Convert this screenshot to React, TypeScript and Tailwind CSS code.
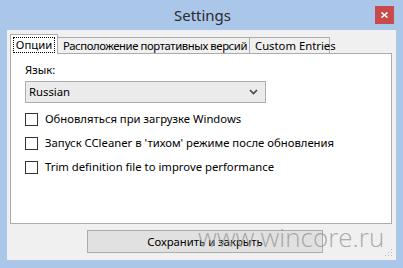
import React from "react";

const font = { fontFamily: '"Noto Sans", "Open Sans", sans-serif' };

function Check({ label }: { label: string }) {
  return (
    <div className="flex items-center h-[24px]">
      <div className="w-[13px] h-[13px] border border-[#333333] bg-white" />
      <span className="ml-[7px] text-[11.3px] text-black leading-none whitespace-nowrap">{label}</span>
    </div>
  );
}

export default function App() {
  return (
    <div
      className="w-[403px] h-[268px] bg-[#aac7ea] flex flex-col relative overflow-hidden"
      style={font}
    >
      {/* title bar */}
      <div className="h-[30px] relative flex items-center justify-center shrink-0">
        <span className="text-[15px] text-[#2b2b2b] leading-none mt-[1px] ml-[2px]">Settings</span>
        <div className="absolute right-[9px] top-[6px] w-[19px] h-[18px] bg-[#c74b4b] flex items-center justify-center">
          <svg width="7" height="6" viewBox="0 0 7 6">
            <path d="M0.5 0.5 L6.5 5.5 M6.5 0.5 L0.5 5.5" stroke="white" strokeWidth="1.6" />
          </svg>
        </div>
      </div>
      {/* client */}
      <div className="mx-[7px] h-[230px] bg-[#f0f0f0] flex flex-col shrink-0 relative">
        <div className="pl-[3px] pr-[4px] pt-[4px] flex flex-col">
          {/* tabs */}
          <div className="flex items-end h-[20px] relative z-10">
            <div className="h-[20px] w-[48px] bg-white border border-[#acacac] border-b-0 flex items-center justify-center">
              <div className="border border-dotted border-black px-[2px] h-[16px] flex items-center text-[11.3px] leading-none text-black whitespace-nowrap">
                Опции
              </div>
            </div>
            <div className="h-[17px] w-[192px] bg-[#f0f0f0] border border-[#acacac] border-l-0 flex items-center pl-[5px] text-[11.3px] tracking-[-0.4px] leading-none text-black whitespace-nowrap overflow-hidden">
              Расположение портативных версий
            </div>
            <div className="h-[17px] w-[80px] bg-[#f0f0f0] border border-[#acacac] border-l-0 flex items-center pl-[5px] text-[11.3px] leading-none text-black whitespace-nowrap">
              Custom Entries
            </div>
          </div>
          {/* panel */}
          <div className="h-[171px] -mt-[1px] bg-white border border-[#acacac] flex flex-col pl-[14px] pt-[10px]">
            <div className="text-[11.3px] leading-none text-black h-[14px]">Язык:</div>
            <div className="mt-[3px] w-[241px] h-[22px] bg-[#ebebeb] border border-[#acacac] flex items-center justify-between pl-[3px] pr-[7px]">
              <span className="text-[11.3px] leading-none text-black">Russian</span>
              <svg width="9" height="6" viewBox="0 0 9 6">
                <path d="M1 1 L4.5 4.5 L8 1" stroke="#444" strokeWidth="1.6" fill="none" />
              </svg>
            </div>
            <div className="mt-[4px] flex flex-col">
              <Check label="Обновляться при загрузке Windows" />
              <Check label="Запуск CCleaner в 'тихом' режиме после обновления" />
              <Check label="Trim definition file to improve performance" />
            </div>
          </div>
        </div>
        {/* button */}
        <div className="mt-[6px] ml-[80px] w-[236px] h-[23px] bg-[#e1e1e1] border border-[#adadad] flex items-center justify-center text-[11.3px] leading-none text-black whitespace-nowrap">
          Сохранить и закрыть
        </div>
        {/* grip */}
        <svg className="absolute right-[3px] bottom-[3px]" width="8" height="8" viewBox="0 0 8 8">
          <rect x="6" y="0" width="1" height="1" fill="#bbb" />
          <rect x="3" y="3" width="1" height="1" fill="#bbb" />
          <rect x="6" y="3" width="1" height="1" fill="#bbb" />
          <rect x="0" y="6" width="1" height="1" fill="#bbb" />
          <rect x="3" y="6" width="1" height="1" fill="#bbb" />
          <rect x="6" y="6" width="1" height="1" fill="#bbb" />
        </svg>
      </div>
      {/* watermark */}
      <div
        className="absolute left-[198px] top-[224px] text-[26px] leading-none text-[#9a9a9a] opacity-80 whitespace-nowrap"
        style={{ fontFamily: '"Open Sans", "Noto Sans", sans-serif', fontWeight: 300 }}
      >
        www.wincore.ru
      </div>
    </div>
  );
}
